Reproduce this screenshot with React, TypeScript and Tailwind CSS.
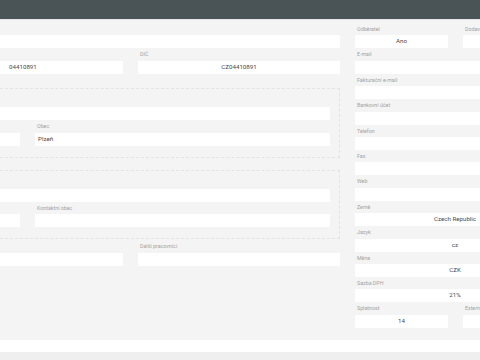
import React from 'react'

type FieldProps = {
  label?: string
  value?: string
  align?: 'left' | 'center'
  padLeft?: string
}

function Field({ label = '', value = '', align = 'center', padLeft = 'pl-[3px]' }: FieldProps) {
  return (
    <div className="flex flex-col min-w-0">
      <div className="h-[12.4px] pl-[2px] text-[5.3px] leading-[12.4px] text-[#a3a3a3] whitespace-nowrap overflow-hidden">
        {label}
      </div>
      <div
        className={
          align === 'center'
            ? 'h-[13px] bg-white text-center text-[6.2px] leading-[13px] text-[#4a4a4a] whitespace-nowrap'
            : `h-[13px] bg-white text-left text-[6.2px] leading-[13px] text-[#4a4a4a] whitespace-nowrap ${padLeft}`
        }
      >
        {value}
      </div>
    </div>
  )
}

function AddressBox({ cityLabel, cityValue }: { cityLabel: string; cityValue: string }) {
  return (
    <div className="-ml-[10px] w-[350px] border border-dashed border-[#e3e3e3] pl-[9px] pr-[9px] pt-[6px] pb-[11px]">
      <Field />
      <div className="grid grid-cols-[20px_1fr] gap-[15px]">
        <Field />
        <Field label={cityLabel} value={cityValue} align="left" />
      </div>
    </div>
  )
}

export default function App() {
  return (
    <div className="w-[480px] h-[360px] overflow-hidden bg-[#f4f4f4] font-[Roboto,sans-serif] flex flex-col">
      {/* top bar */}
      <div className="h-[20px] shrink-0 bg-[#4a5356] border-b border-[#e4e4e4]" />

      {/* content */}
      <div className="flex-1 flex gap-[15px] pt-[3px] overflow-hidden">
        {/* left column */}
        <div className="w-[340px] shrink-0 flex flex-col">
          <Field />
          <div className="grid grid-cols-[123px_1fr] gap-[15px]">
            <Field value="04410891" align="left" padLeft="pl-[9px]" />
            <Field label="DIČ" value="CZ04410891" />
          </div>
          <div className="mt-[14px]">
            <AddressBox cityLabel="Obec" cityValue="Plzeň" />
          </div>
          <div className="mt-[12px]">
            <AddressBox cityLabel="Kontaktní obec" cityValue="" />
          </div>
          <div className="mt-[1px] grid grid-cols-[123px_1fr] gap-[15px]">
            <Field />
            <Field label="Další pracovníci" />
          </div>
        </div>

        {/* right column */}
        <div className="w-[200px] shrink-0 flex flex-col">
          <div className="grid grid-cols-[93px_1fr] gap-[15px]">
            <Field label="Odběratel" value="Ano" />
            <Field label="Dodavatel" />
          </div>
          <Field label="E-mail" />
          <Field label="Fakturační e-mail" />
          <Field label="Bankovní účet" />
          <Field label="Telefon" />
          <Field label="Fax" />
          <Field label="Web" />
          <Field label="Země" value="Czech Republic" />
          <Field label="Jazyk" value="cz" />
          <Field label="Měna" value="CZK" />
          <Field label="Sazba DPH" value="21%" />
          <div className="grid grid-cols-[93px_1fr] gap-[15px]">
            <Field label="Splatnost" value="14" />
            <Field label="Externí" />
          </div>
        </div>
      </div>

      {/* footer */}
      <div className="h-[12px] shrink-0 bg-white" />
      <div className="h-[8px] shrink-0 bg-[#efefef]" />
    </div>
  )
}
